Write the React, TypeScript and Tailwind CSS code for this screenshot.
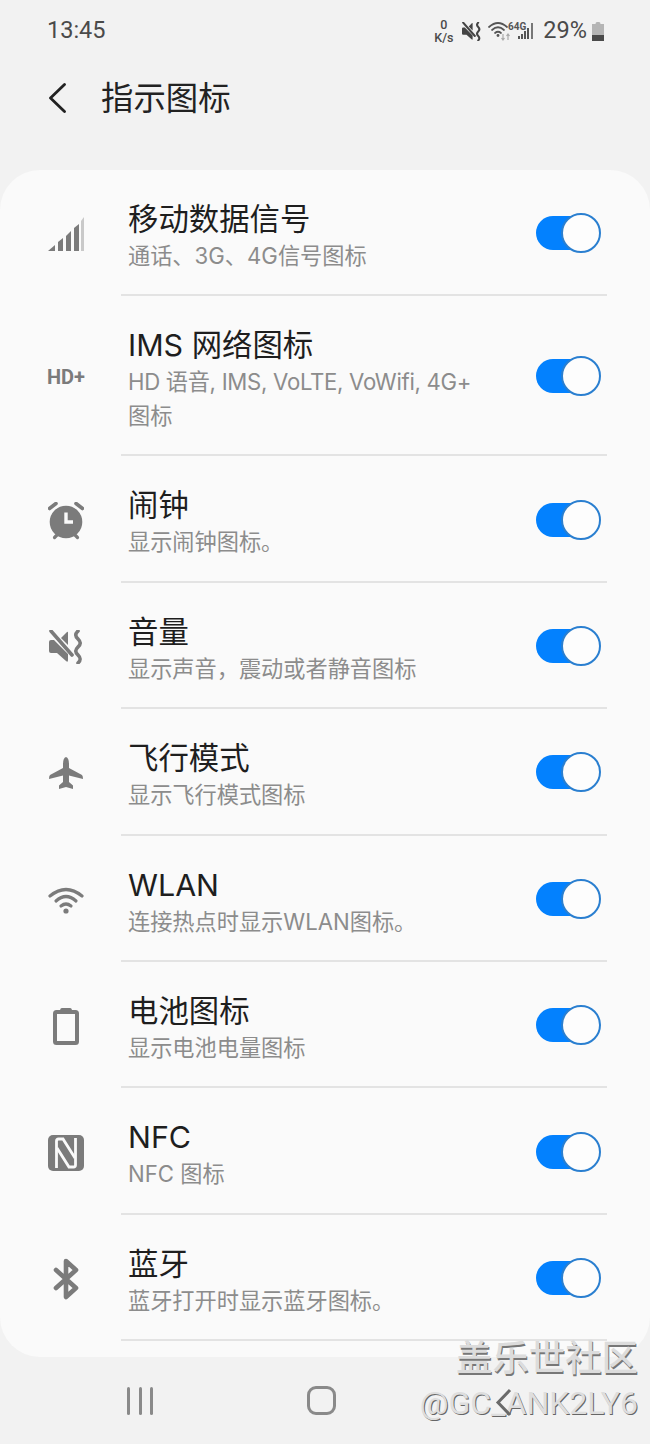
import React from "react";

const G = "#7b7b7b";

function Svg({ w, h, vb, children }: { w: number; h: number; vb?: string; children: React.ReactNode }) {
  return (
    <svg width={w} height={h} viewBox={vb ?? `0 0 ${w} ${h}`} fill="none">
      {children}
    </svg>
  );
}

const SignalIcon = () => (
  <Svg w={36} h={34}>
    <polygon points="0,34 7,28 7,34" fill={G} />
    <polygon points="10,34 10,25 15,21 15,34" fill={G} />
    <polygon points="18,34 18,19 23,14 23,34" fill={G} />
    <polygon points="26,34 26,11 31,7 31,34" fill={G} />
    <polygon points="33,34 33,4 36,0 36,34" fill="#c9c9c9" />
  </Svg>
);

const AlarmIcon = () => (
  <Svg w={36} h={38}>
    <circle cx="18" cy="20" r="16.3" fill={G} />
    <path d="M1.5 6.5 L8 1.5 M34.5 6.5 L28 1.5" stroke={G} strokeWidth="3.6" strokeLinecap="round" />
    <path d="M6.5 35.5 L9 33 M29.5 35.5 L27 33" stroke={G} strokeWidth="3.2" strokeLinecap="round" />
    <path d="M18 10.5 V20 H25" stroke="#fafafa" strokeWidth="3.4" />
  </Svg>
);

const MutePaths = ({ c, sw }: { c: string; sw: number }) => (
  <>
    <path d="M0 12 Q0 10 2 10 H5 L19 24 V30 Q19 33 17 31 L8 23 H2 Q0 23 0 21 Z" fill={c} />
    <path d="M12 8 L18 2 Q19 1 19 3 V15 Z" fill={c} />
    <path d="M2 1 L23 25" stroke={c} strokeWidth={sw} strokeLinecap="round" />
    <path
      d="M29 1 C26 4 26 6 29 9 C32 12 32 14 29 17 C26 20 26 22 29 25 C32 28 32 30 29 33"
      stroke={c}
      strokeWidth={sw}
      strokeLinecap="round"
    />
  </>
);

const MuteIcon = () => (
  <Svg w={34} h={34}>
    <MutePaths c={G} sw={3.6} />
  </Svg>
);

const PlaneIcon = () => (
  <Svg w={34} h={32}>
    <path
      d="M17 0 Q20 1 20 7 V11 L33 18 Q34 19 34 22 L20 18.5 V25 L24 28.5 V32 L17 30 L10 32 V28.5 L14 25 V18.5 L0 22 Q0 19 1 18 L14 11 V7 Q14 1 17 0 Z"
      fill={G}
    />
  </Svg>
);

const WifiIcon = () => (
  <Svg w={36} h={28}>
    <path d="M2 10 Q18 -3 34 10" stroke={G} strokeWidth="3.2" strokeLinecap="round" />
    <path d="M8 15 Q18 6 28 15" stroke={G} strokeWidth="3.2" strokeLinecap="round" />
    <path d="M13 20 Q18 16 23 20" stroke={G} strokeWidth="3.2" strokeLinecap="round" />
    <circle cx="18" cy="25" r="2.6" fill={G} />
  </Svg>
);

const BatteryIcon = () => (
  <Svg w={26} h={38}>
    <path d="M7 4 Q7 1 9 1 H17 Q19 1 19 4" fill={G} />
    <rect x="2" y="5" width="22" height="31" rx="1.5" stroke={G} strokeWidth="4" fill="none" />
  </Svg>
);

const NfcIcon = () => (
  <Svg w={36} h={36}>
    <rect width="36" height="36" rx="5" fill={G} />
    <path d="M8.5 33 V6 Q8.5 4 10.5 4 H15 L27 23" stroke="#fafafa" strokeWidth="2.8" />
    <path d="M27.5 3 V30 Q27.5 32 25.5 32 H21 L9 13" stroke="#fafafa" strokeWidth="2.8" />
  </Svg>
);

const BluetoothIcon = () => (
  <Svg w={26} h={42}>
    <path
      d="M3 12 L23 30 L13 39 V3 L23 12 L3 30"
      stroke={G}
      strokeWidth="4.6"
      strokeLinecap="round"
      strokeLinejoin="round"
    />
  </Svg>
);

const Toggle = () => (
  <div className="relative h-[34px] w-[54px] shrink-0 rounded-full bg-[#0381fe]">
    <div className="absolute -right-[11px] -top-[3px] h-[40px] w-[40px] rounded-full border-2 border-[#2a7fd0] bg-[#fdfdfd]" />
  </div>
);

type RowData = { icon: React.ReactNode; title: string; sub: React.ReactNode };

const rows: RowData[] = [
  { icon: <SignalIcon />, title: "移动数据信号", sub: "通话、3G、4G信号图标" },
  {
    icon: <span className="font-['Roboto',sans-serif] text-[20px] font-bold leading-none text-[#7b7b7b]">HD+</span>,
    title: "IMS 网络图标",
    sub: (
      <>
        <span className="tracking-[-0.3px]">HD 语音, IMS, VoLTE, VoWifi, 4G+</span>
        <br />
        图标
      </>
    ),
  },
  { icon: <AlarmIcon />, title: "闹钟", sub: "显示闹钟图标。" },
  { icon: <MuteIcon />, title: "音量", sub: "显示声音，震动或者静音图标" },
  { icon: <PlaneIcon />, title: "飞行模式", sub: "显示飞行模式图标" },
  { icon: <WifiIcon />, title: "WLAN", sub: "连接热点时显示WLAN图标。" },
  { icon: <BatteryIcon />, title: "电池图标", sub: "显示电池电量图标" },
  { icon: <NfcIcon />, title: "NFC", sub: "NFC 图标" },
  { icon: <BluetoothIcon />, title: "蓝牙", sub: "蓝牙打开时显示蓝牙图标。" },
];

function Row({ data, first }: { data: RowData; first: boolean }) {
  return (
    <div>
      <div className="flex items-center pl-[47px] pr-[49px] pt-[4px]">
        <div className="mr-[43px] flex w-[38px] shrink-0 items-center justify-center">{data.icon}</div>
        <div
          className={`min-w-0 flex-1 font-['Inter','Noto_Sans_CJK_SC',sans-serif] ${
            first ? "pb-[21px] pt-[25px]" : "pb-[21.4px] pt-[25px]"
          }`}
        >
          <div className="text-[30.4px] leading-[40px] text-[#1e1e1e]">{data.title}</div>
          <div className="text-[22.2px] leading-[34px] text-[#8c8c8c]">{data.sub}</div>
        </div>
        <div className="mb-[2px] mr-[11px]">
          <Toggle />
        </div>
      </div>
      <div className="ml-[121px] mr-[43px] h-[2px] bg-[#e3e3e3]" />
    </div>
  );
}

export default function App() {
  return (
    <div className="relative h-[1444px] w-[650px] overflow-hidden bg-[#f2f2f2] font-['Roboto','Noto_Sans_CJK_SC',sans-serif]">
      {/* status bar */}
      <div className="flex h-[62px] items-center justify-between pl-[47px] pr-[46px] text-[#4a4a4a]">
        <span className="text-[23.5px] leading-none">13:45</span>
        <div className="flex items-center">
          <div className="mr-[8px] flex w-[21px] flex-col items-center text-[12.5px] font-medium leading-[13px]">
            <span>0</span>
            <span>K/s</span>
          </div>
          <div className="mr-[7px]">
            <Svg w={19} h={19} vb="0 0 34 34">
              <MutePaths c="#444" sw={3.6} />
            </Svg>
          </div>
          <div className="mr-[8px]">
            <Svg w={47} h={20}>
              <path d="M1 6 Q10 -2 19 6" stroke="#555" strokeWidth="1.7" strokeLinecap="round" />
              <path d="M4 9 Q10 3.5 16 9" stroke="#555" strokeWidth="1.7" strokeLinecap="round" />
              <path d="M7 12 Q10 9.5 13 12" stroke="#555" strokeWidth="1.7" strokeLinecap="round" />
              <circle cx="10" cy="14.5" r="1.4" fill="#555" />
              <path d="M15 13 V19 M13.5 17 L15 19 L16.5 17" stroke="#aaa" strokeWidth="1.2" />
              <path d="M20 19 V13 M18.5 15 L20 13 L21.5 15" stroke="#aaa" strokeWidth="1.2" />
              <text x="20" y="9" fontSize="10" fontWeight="700" fontFamily="Roboto, sans-serif" fill="#555">
                64G
              </text>
              <rect x="30" y="15" width="2" height="3" fill="#555" />
              <rect x="33" y="13" width="2" height="5" fill="#555" />
              <rect x="36" y="10" width="2" height="8" fill="#555" />
              <rect x="39" y="7" width="2" height="11" fill="#555" />
              <rect x="43" y="2" width="2" height="16" fill="#777" />
            </Svg>
          </div>
          <span className="mr-[5px] text-[23.5px] leading-none">29%</span>
          <Svg w={12} h={19}>
            <path d="M3.5 2 Q3.5 0 5 0 H7 Q8.5 0 8.5 2 Z" fill="#b5b5b5" />
            <rect x="0" y="2" width="12" height="11" fill="#b5b5b5" />
            <rect x="0" y="13" width="12" height="6" fill="#4a4a4a" />
          </Svg>
        </div>
      </div>

      {/* header */}
      <div className="flex h-[72px] items-center pl-[48px]">
        <Svg w={18} h={30}>
          <path d="M16.5 1.5 L2.5 15 L16.5 28.5" stroke="#222" strokeWidth="2.8" strokeLinecap="round" strokeLinejoin="round" />
        </Svg>
        <span className="ml-[35px] translate-y-[1px] text-[32.4px] leading-[44px] text-[#222222]">指示图标</span>
      </div>

      <div className="h-[36px]" />

      {/* card */}
      <div className="rounded-[40px] bg-[#fafafa] pb-[16px]">
        {rows.map((r, i) => (
          <Row key={i} data={r} first={i === 0} />
        ))}
      </div>

      {/* nav bar */}
      <div className="flex h-[87px] items-center">
        <div className="ml-[127px] flex w-[26px] justify-between">
          <div className="h-[28px] w-[3px] rounded-sm bg-[#8a8a8a]" />
          <div className="h-[28px] w-[3px] rounded-sm bg-[#8a8a8a]" />
          <div className="h-[28px] w-[3px] rounded-sm bg-[#8a8a8a]" />
        </div>
        <div className="ml-[154px] h-[29px] w-[29px] rounded-[9px] border-[3px] border-[#8a8a8a]" />
      </div>

      {/* watermark */}
      <div className="absolute right-[12px] top-[1337px] flex flex-col items-end">
        <span className="text-[36.4px] font-medium leading-[44px] text-[#dcdcdc] [text-shadow:1px_2px_0_#777]">
          盖乐世社区
        </span>
        <span className="text-[32px] leading-[44px] text-[#dedede] [text-shadow:1px_1px_0_#666]">
          @GC_ANK2LY6
        </span>
      </div>
      <div className="absolute left-[495px] top-[1388px]">
        <Svg w={18} h={29}>
          <path d="M15 2 L3 14.5 L15 27" stroke="#6a6a6a" strokeWidth="3" />
        </Svg>
      </div>
    </div>
  );
}
